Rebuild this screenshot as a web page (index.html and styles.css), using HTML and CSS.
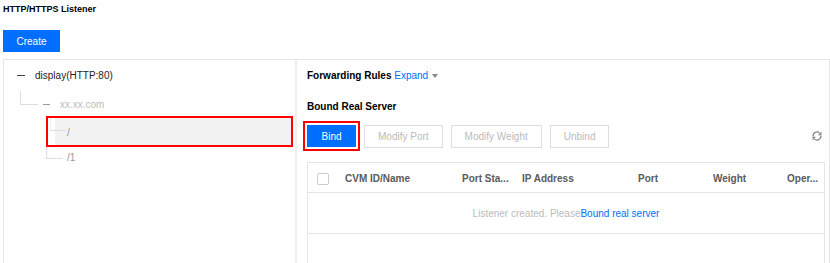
FILE: index.html
```html
<!DOCTYPE html>
<html lang="en">
<head>
    <meta charset="UTF-8">
    <meta name="viewport" content="width=device-width, initial-scale=1.0">
    <title>HTTP/HTTPS Listener</title>
    <link rel="stylesheet" href="styles.css">
</head>
<body>
    <div class="page">
        <h3 class="title">HTTP/HTTPS Listener</h3>
        <button class="btn-primary create">Create</button>

        <div class="panel">
            <div class="tree">
                <div class="node lvl0">
                    <span class="dash"></span>
                    <span class="label">display(HTTP:80)</span>
                </div>
                <div class="node lvl1">
                    <span class="link"></span>
                    <span class="dash light"></span>
                    <span class="label muted">xx.xx.com</span>
                </div>
                <div class="node lvl2 selected">
                    <span class="link"></span>
                    <span class="label path">/</span>
                </div>
                <div class="node lvl2 last">
                    <span class="link"></span>
                    <span class="label path">/1</span>
                </div>
            </div>

            <div class="detail">
                <div class="section-row">
                    <span class="section-title">Forwarding Rules</span>
                    <a class="expand">Expand<i class="caret"></i></a>
                </div>
                <div class="section-title sub">Bound Real Server</div>

                <div class="toolbar">
                    <div class="mark"><button class="btn-primary bind">Bind</button></div>
                    <button class="btn">Modify Port</button>
                    <button class="btn">Modify Weight</button>
                    <button class="btn">Unbind</button>
                    <svg class="refresh" width="12" height="12" viewBox="0 0 16 16">
                        <path d="M2.8 8.5A5.2 5.2 0 0 1 11.6 4.2" fill="none" stroke="#888" stroke-width="1.7"/>
                        <path d="M14 2.2V7H9.2Z" fill="#888"/>
                        <path d="M13.2 7.5A5.2 5.2 0 0 1 4.4 11.8" fill="none" stroke="#888" stroke-width="1.7"/>
                        <path d="M2 13.8V9H6.8Z" fill="#888"/>
                    </svg>
                </div>

                <div class="table">
                    <div class="thead">
                        <div class="cell"><span class="checkbox"></span></div>
                        <div class="cell">CVM ID/Name</div>
                        <div class="cell">Port Sta...</div>
                        <div class="cell">IP Address</div>
                        <div class="cell">Port</div>
                        <div class="cell">Weight</div>
                        <div class="cell">Oper...</div>
                    </div>
                    <div class="empty">
                        Listener created. Please<a class="link-text">Bound real server</a>
                    </div>
                </div>
            </div>
        </div>
    </div>
</body>
</html>
```

FILE: styles.css
```css
/* Listener page */
body {
    margin: 0;
    font-family: 'Liberation Sans', Arial, sans-serif;
    font-size: 10px;
    color: #333;
    background: #fff;
    overflow: hidden;
}
.page {
    padding: 3px 0 0 3px;
}
.title {
    margin: 0;
    font-size: 9px;
    line-height: 13px;
    font-weight: bold;
    color: #000;
}
.btn-primary {
    background-color: #006eff;
    color: #fff;
    border: none;
    font-family: inherit;
    font-size: 10px;
    padding: 0;
    cursor: pointer;
}
.create {
    display: block;
    margin-top: 14px;
    width: 57px;
    height: 22px;
}
.panel {
    margin-top: 7px;
    width: 825px;
    height: 210px;
    border: 1px solid #e5e5e5;
    display: flex;
}

/* tree */
.tree {
    width: 291px;
    border-right: 2px solid #eee;
    flex-shrink: 0;
}
.node {
    display: flex;
}
.node .dash {
    display: block;
    height: 1px;
    background: #444;
}
.node .dash.light {
    background: #999;
}
.node .label {
    white-space: nowrap;
}
.node .link {
    display: block;
    border-left: 1px solid #ddd;
    border-bottom: 1px solid #ddd;
    box-sizing: border-box;
}
.lvl0 {
    height: 30px;
    align-items: center;
    padding-left: 13px;
}
.lvl0 .dash {
    width: 8px;
    margin-right: 10px;
}
.lvl0 .label {
    color: #222;
}
.lvl1 {
    height: 26px;
    align-items: flex-start;
    padding-left: 16px;
}
.lvl1 .link {
    width: 18px;
    height: 14px;
    margin-top: 1px;
}
.lvl1 .dash {
    width: 7px;
    margin: 14px 10px 0 5px;
}
.lvl1 .label {
    line-height: 12px;
    margin-top: 9px;
}
.muted {
    color: #bbb;
}
.path {
    color: #999;
}
.lvl2 {
    margin-left: 42px;
}
.lvl2.selected {
    height: 31px;
    margin-right: 2px;
    border: 2px solid #f00;
    box-sizing: border-box;
    background: linear-gradient(to right, #fff 7px, #f2f2f2 7px);
    align-items: flex-start;
}
.selected .link {
    width: 16px;
    height: 13px;
    margin-left: 2px;
    border-left-color: #eee;
}
.selected .label {
    line-height: 27px;
    margin: 1px 0 0 1px;
}
.lvl2.last {
    height: 22px;
    align-items: flex-start;
}
.last .link {
    width: 17px;
    height: 12px;
}
.last .label {
    line-height: 12px;
    margin: 5px 0 0 4px;
}

/* detail */
.detail {
    flex: 1;
    padding: 6px 4px 0 10px;
    display: flex;
    flex-direction: column;
}
.section-row {
    line-height: 20px;
}
.section-title {
    font-weight: bold;
    color: #000;
}
.section-title.sub {
    display: block;
    line-height: 20px;
    margin-top: 11px;
}
.expand {
    color: #006eff;
    cursor: pointer;
}
.caret {
    display: inline-block;
    margin-left: 4px;
    vertical-align: 1px;
    border-left: 3px solid transparent;
    border-right: 3px solid transparent;
    border-top: 4px solid #888;
}
.toolbar {
    margin-top: 4px;
    height: 30px;
    display: flex;
    align-items: center;
}
.mark {
    margin-left: -4px;
    margin-right: 4px;
    border: 2px solid #f00;
    padding: 2px;
    display: flex;
}
.bind {
    width: 49px;
    height: 22px;
}
.btn {
    height: 23px;
    padding: 0 13px;
    margin-right: 8px;
    background: #fff;
    border: 1px solid #ddd;
    color: #bbb;
    font-family: inherit;
    font-size: 10px;
    cursor: pointer;
}
.refresh {
    margin-left: auto;
    margin-right: 2px;
}

/* table */
.table {
    margin-top: 11px;
    flex: 1;
    border: 1px solid #e5e5e5;
    border-bottom: none;
}
.thead {
    display: grid;
    grid-template-columns: 37px 117px 60px 116px 75px 74px 1fr;
    height: 29px;
    align-items: center;
    border-bottom: 1px solid #e5e5e5;
    font-weight: bold;
    color: #5a5a5a;
}
.thead .cell {
    white-space: nowrap;
    overflow: hidden;
    padding-top: 2px;
}
.checkbox {
    display: block;
    width: 12px;
    height: 12px;
    margin-left: 9px;
    border: 1px solid #ccc;
    border-radius: 2px;
    box-sizing: border-box;
}
.empty {
    height: 40px;
    line-height: 42px;
    border-bottom: 1px solid #e5e5e5;
    text-align: center;
    color: #bbb;
}
.link-text {
    color: #006eff;
    cursor: pointer;
}
```
